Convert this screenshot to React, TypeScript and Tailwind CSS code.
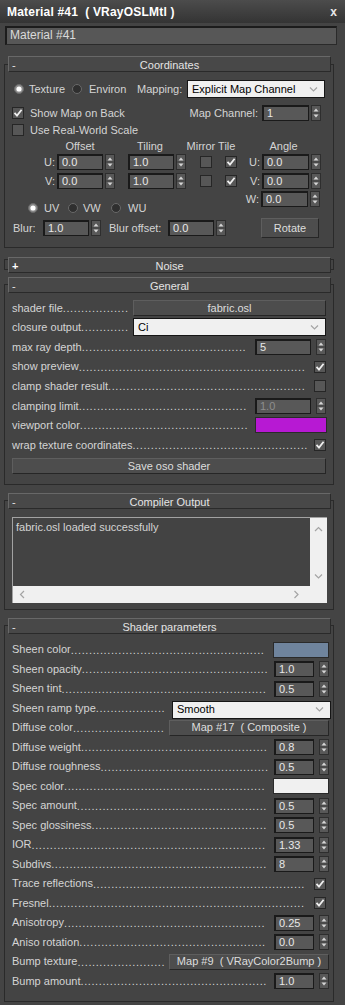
import React, { useLayoutEffect, useRef, useState } from "react";

function Spinner() {
  return (
    <svg width="10" height="16" viewBox="0 0 10 16" className="shrink-0">
      <rect x="0.5" y="0.5" width="9" height="15" fill="#585858" stroke="#2e2e2e" />
      <line x1="1" y1="8" x2="9" y2="8" stroke="#3c3c3c" />
      <path d="M2.5 6.5 L5 3.5 L7.5 6.5 Z" fill="#d6d6d6" />
      <path d="M2.5 9.5 L5 12.5 L7.5 9.5 Z" fill="#d6d6d6" />
    </svg>
  );
}

function Field({ v, w, dim }: { v: string; w: string; dim?: boolean }) {
  return (
    <div
      className={`${w} h-[16px] shrink-0 bg-[#585858] border border-[#1a1a1a] border-t-2 border-l-2 pl-[3px] text-[11px] leading-[13px] ${
        dim ? "text-[#8e8e8e]" : "text-[#e8e8e8]"
      }`}
    >
      {v}
    </div>
  );
}

function Check({ on }: { on?: boolean }) {
  return (
    <svg width="12" height="12" viewBox="0 0 12 12" className="shrink-0">
      <rect x="0.5" y="0.5" width="11" height="11" fill="#575757" stroke="#262626" />
      {on && <path d="M2.5 5.8 L5 8.5 L9.6 2.8" fill="none" stroke="#f0f0f0" strokeWidth="1.8" />}
    </svg>
  );
}

function Radio({ on }: { on?: boolean }) {
  return (
    <svg width="10" height="10" viewBox="0 0 10 10" className="shrink-0">
      <circle cx="5" cy="5" r="4.5" fill={on ? "#8c8c8c" : "#2f2f2f"} stroke="#6a6a6a" />
      {on && <circle cx="5" cy="5" r="2.6" fill="#ffffff" />}
    </svg>
  );
}

function Chevron({ dir }: { dir: "down" | "up" | "left" | "right" }) {
  const d = {
    down: "M1 1.5 L4.5 5 L8 1.5",
    up: "M1 5 L4.5 1.5 L8 5",
    left: "M5 1 L1.5 4.5 L5 8",
    right: "M1.5 1 L5 4.5 L1.5 8",
  }[dir];
  const vert = dir === "down" || dir === "up";
  return (
    <svg width={vert ? 9 : 7} height={vert ? 7 : 9} viewBox={vert ? "0 0 9 7" : "0 0 7 9"} className="shrink-0">
      <path d={d} fill="none" stroke="#a4a4a4" strokeWidth="1.2" />
    </svg>
  );
}

function Drop({ v, w }: { v: string; w: string }) {
  return (
    <div className={`${w} h-[18px] shrink-0 bg-[#f0f0f0] border border-[#151515] flex items-center pl-[4px] pr-[6px] text-[11px] text-black`}>
      <span className="flex-1">{v}</span>
      <Chevron dir="down" />
    </div>
  );
}

function Btn({ w, h = "h-[16px]", children }: { w: string; h?: string; children: React.ReactNode }) {
  return (
    <div className={`${w} ${h} shrink-0 bg-[#4d4d4d] border border-[#262626] border-t-[#5e5e5e] border-l-[#5e5e5e] flex items-center justify-center text-[11px] text-[#dddddd]`}>
      {children}
    </div>
  );
}

function Swatch({ w, color }: { w: string; color: string }) {
  return <div className={`${w} h-[16px] shrink-0 border border-[#2a2a2a] ${color}`} />;
}

function Header({ sign, title, mt }: { sign: string; title: string; mt: string }) {
  return (
    <div
      className={`relative ${mt} ml-[3px] w-[323px] h-[16px] bg-[#484848] border border-t-[#686868] border-l-[#686868] border-b-[#2a2a2a] border-r-[#2a2a2a] grid grid-cols-[20px_1fr_20px] items-center text-[11px] text-[#e4e4e4]`}
    >
      <span className={`pl-[3px] ${sign === "+" ? "font-bold text-white" : ""}`}>{sign}</span>
      <span className="text-center">{title}</span>
      <span />
    </div>
  );
}

// dot leader: fill the free width with as many dots as fit
function Leader() {
  const ref = useRef<HTMLSpanElement>(null);
  const [n, setN] = useState(0);
  useLayoutEffect(() => {
    if (ref.current) setN(Math.max(0, Math.floor(ref.current.clientWidth / 3.7)));
  }, []);
  return (
    <span ref={ref} className="flex-1 min-w-0 overflow-hidden whitespace-nowrap tracking-[0.6px] leading-[12px]">
      {".".repeat(n)}
    </span>
  );
}

function Row({ name, h, children }: { name: string; h: string; children: React.ReactNode }) {
  return (
    <div className={`flex items-center ${h}`}>
      <span className="whitespace-nowrap">{name}</span>
      <Leader />
      <div className="ml-[3px] flex items-center gap-[5px]">{children}</div>
    </div>
  );
}

function Spin({ v, w, dim }: { v: string; w: string; dim?: boolean }) {
  return (
    <>
      <Field v={v} w={w} dim={dim} />
      <Spinner />
    </>
  );
}

function UVRow({ axis, off, tile, ang }: { axis: string; off: string; tile: string; ang: string }) {
  return (
    <div className="flex items-center h-[16px]">
      <span className="w-[52px] text-right pr-[2px]">{axis}:</span>
      <Field v={off} w="w-[46px]" />
      <div className="ml-[2px]"><Spinner /></div>
      <div className="ml-[13px]"><Field v={tile} w="w-[46px]" /></div>
      <div className="ml-[2px]"><Spinner /></div>
      <div className="ml-[14px]"><Check /></div>
      <div className="ml-[13px]"><Check on /></div>
      <span className="w-[25px] text-right pr-[2px]">{axis}:</span>
      <Field v={ang} w="w-[47px]" />
      <div className="ml-[2px]"><Spinner /></div>
    </div>
  );
}

export default function App() {
  const rowG = "h-[19.6px]";
  const rowS = "h-[19.5px]";
  return (
    <div className="w-[345px] h-[1005px] overflow-hidden bg-[#444444] font-['Liberation_Sans',Arial,sans-serif] text-[11px] text-[#d4d4d4]">
      {/* title bar */}
      <div className="h-[23px] bg-gradient-to-b from-[#4c4c4c] to-[#343434] flex items-center justify-between pl-[7px] pr-[8px]">
        <span className="text-[12px] font-bold text-white tracking-[0.2px]">Material #41&nbsp;&nbsp;( VRayOSLMtl )</span>
        <span className="text-[12px] font-bold text-[#e8e8e8]">x</span>
      </div>
      <div className="mt-[3px] ml-[5px] w-[332px] h-[19px] bg-[#575757] border border-[#2a2a2a] border-t-2 border-l-2 border-t-[#1c1c1c] border-l-[#1c1c1c] pl-[3px] text-[12px] leading-[15px] text-[#dadada]">
        Material #41
      </div>

      {/* Coordinates */}
      <div className="mt-[19px] ml-[4px] w-[330px] border border-[#2a2a2a] pb-[9px]">
        <Header sign="-" title="Coordinates" mt="-mt-[9px]" />
        <div className="mt-[8px] h-[18px] flex items-center">
          <div className="ml-[9px] w-[58px] flex items-center gap-[5px]">
            <Radio on />
            <span>Texture</span>
          </div>
          <div className="w-[65px] flex items-center gap-[7px]">
            <Radio />
            <span>Environ</span>
          </div>
          <span className="w-[50px]">Mapping:</span>
          <Drop v="Explicit Map Channel" w="w-[138px]" />
        </div>
        <div className="mt-[7px] h-[16px] flex items-center">
          <div className="ml-[7px]"><Check on /></div>
          <span className="ml-[6px]">Show Map on Back</span>
          <span className="flex-1" />
          <span>Map Channel:</span>
          <div className="ml-[4px]"><Field v="1" w="w-[47px]" /></div>
          <div className="ml-[2px] mr-[12px]"><Spinner /></div>
        </div>
        <div className="mt-[3px] h-[12px] flex items-center">
          <div className="ml-[7px]"><Check /></div>
          <span className="ml-[6px]">Use Real-World Scale</span>
        </div>
        <div className="mt-[4px] h-[12px] flex items-center">
          <span className="ml-[52px] w-[46px] text-center">Offset</span>
          <span className="ml-[24px] w-[46px] text-center">Tiling</span>
          <span className="ml-[8px] w-[60px] text-center whitespace-nowrap">Mirror Tile</span>
          <span className="ml-[19px] w-[47px] text-center">Angle</span>
        </div>
        <div className="mt-[2px]">
          <UVRow axis="U" off="0.0" tile="1.0" ang="0.0" />
        </div>
        <div className="mt-[3px]">
          <UVRow axis="V" off="0.0" tile="1.0" ang="0.0" />
        </div>
        <div className="mt-[2px] h-[16px] flex items-start">
          <div className="ml-[23px] mt-[9px] flex items-center">
            <div className="w-[40px] flex items-center gap-[6px]">
              <Radio on />
              <span>UV</span>
            </div>
            <div className="w-[43px] flex items-center gap-[5px]">
              <Radio />
              <span>VW</span>
            </div>
            <div className="flex items-center gap-[7px]">
              <Radio />
              <span>WU</span>
            </div>
          </div>
          <span className="flex-1" />
          <span className="w-[25px] text-right pr-[2px] leading-[16px]">W:</span>
          <Field v="0.0" w="w-[47px]" />
          <div className="ml-[2px] mr-[13px]"><Spinner /></div>
        </div>
        <div className="mt-[11px] h-[20px] flex items-center">
          <span className="ml-[8px] w-[30px]">Blur:</span>
          <Field v="1.0" w="w-[46px]" />
          <div className="ml-[2px]"><Spinner /></div>
          <span className="ml-[8px] w-[59px] whitespace-nowrap">Blur offset:</span>
          <Field v="0.0" w="w-[46px]" />
          <div className="ml-[2px]"><Spinner /></div>
          <div className="ml-[35px]">
            <Btn w="w-[58px]" h="h-[20px]">Rotate</Btn>
          </div>
        </div>
      </div>

      {/* Noise (collapsed) */}
      <div className="mt-[11px] ml-[4px] w-[330px] h-[11px] border border-[#2a2a2a]">
        <Header sign="+" title="Noise" mt="-mt-[3px]" />
      </div>

      {/* General */}
      <div className="mt-[14px] ml-[4px] w-[330px] border border-[#2a2a2a] pb-[10px]">
        <Header sign="-" title="General" mt="-mt-[8px]" />
        <div className="mt-[5px] pl-[7px] pr-[7px]">
          <Row name="shader file" h={rowG}>
            <Btn w="w-[193px]">fabric.osl</Btn>
          </Row>
          <Row name="closure output" h={rowG}>
            <Drop v="Ci" w="w-[193px]" />
          </Row>
          <Row name="max ray depth" h={rowG}>
            <Spin v="5" w="w-[56px]" />
          </Row>
          <Row name="show preview" h={rowG}>
            <Check on />
          </Row>
          <Row name="clamp shader result" h={rowG}>
            <Check />
          </Row>
          <Row name="clamping limit" h={rowG}>
            <Spin v="1.0" w="w-[56px]" dim />
          </Row>
          <Row name="viewport color" h={rowG}>
            <div className="-mr-[1px]">
              <Swatch w="w-[72px]" color="bg-[#b719d3]" />
            </div>
          </Row>
          <Row name="wrap texture coordinates" h={rowG}>
            <Check on />
          </Row>
          <div className="mt-[3px]">
            <Btn w="w-[314px]">Save oso shader</Btn>
          </div>
        </div>
      </div>

      {/* Compiler Output */}
      <div className="mt-[15px] ml-[4px] w-[330px] border border-[#2a2a2a] pb-[6px]">
        <Header sign="-" title="Compiler Output" mt="-mt-[8px]" />
        <div className="mt-[8px] ml-[7px] w-[315px] h-[86px] bg-[#f0f0f0] border-t border-l border-[#a2a2a2] grid grid-cols-[1fr_17px] grid-rows-[1fr_17px]">
          <div className="bg-[#434343] pl-[3px] pt-[1px] text-[11px] text-[#d4d4d4]">fabric.osl loaded successfully</div>
          <div className="flex flex-col items-center justify-between pt-[8px] pb-[6px]">
            <Chevron dir="up" />
            <Chevron dir="down" />
          </div>
          <div className="flex items-center justify-between pl-[6px] pr-[10px]">
            <Chevron dir="left" />
            <Chevron dir="right" />
          </div>
          <div />
        </div>
      </div>

      {/* Shader parameters */}
      <div className="mt-[15px] ml-[4px] w-[330px] border border-[#2a2a2a] pb-[10px]">
        <Header sign="-" title="Shader parameters" mt="-mt-[8px]" />
        <div className="mt-[6px] pl-[7px] pr-[4px]">
          <Row name="Sheen color" h={rowS}>
            <Swatch w="w-[56px]" color="bg-[#6f849d]" />
          </Row>
          <Row name="Sheen opacity" h={rowS}>
            <Spin v="1.0" w="w-[40px]" />
          </Row>
          <Row name="Sheen tint" h={rowS}>
            <Spin v="0.5" w="w-[40px]" />
          </Row>
          <Row name="Sheen ramp type" h={rowS}>
            <div className="-mr-[2px] mt-[3px]">
              <Drop v="Smooth" w="w-[159px]" />
            </div>
          </Row>
          <Row name="Diffuse color" h={rowS}>
            <Btn w="w-[160px]">Map #17&nbsp;&nbsp;( Composite )</Btn>
          </Row>
          <Row name="Diffuse weight" h={rowS}>
            <Spin v="0.8" w="w-[40px]" />
          </Row>
          <Row name="Diffuse roughness" h={rowS}>
            <Spin v="0.5" w="w-[40px]" />
          </Row>
          <Row name="Spec color" h={rowS}>
            <Swatch w="w-[56px]" color="bg-[#f0f0f0]" />
          </Row>
          <Row name="Spec amount" h={rowS}>
            <Spin v="0.5" w="w-[40px]" />
          </Row>
          <Row name="Spec glossiness" h={rowS}>
            <Spin v="0.5" w="w-[40px]" />
          </Row>
          <Row name="IOR" h={rowS}>
            <Spin v="1.33" w="w-[40px]" />
          </Row>
          <Row name="Subdivs" h={rowS}>
            <Spin v="8" w="w-[40px]" />
          </Row>
          <Row name="Trace reflections" h={rowS}>
            <div className="mr-[3px]"><Check on /></div>
          </Row>
          <Row name="Fresnel" h={rowS}>
            <div className="mr-[3px]"><Check on /></div>
          </Row>
          <Row name="Anisotropy" h={rowS}>
            <Spin v="0.25" w="w-[40px]" />
          </Row>
          <Row name="Aniso rotation" h={rowS}>
            <Spin v="0.0" w="w-[40px]" />
          </Row>
          <Row name="Bump texture" h={rowS}>
            <Btn w="w-[160px]">Map #9&nbsp;&nbsp;( VRayColor2Bump )</Btn>
          </Row>
          <Row name="Bump amount" h={rowS}>
            <Spin v="1.0" w="w-[40px]" />
          </Row>
        </div>
      </div>
    </div>
  );
}
